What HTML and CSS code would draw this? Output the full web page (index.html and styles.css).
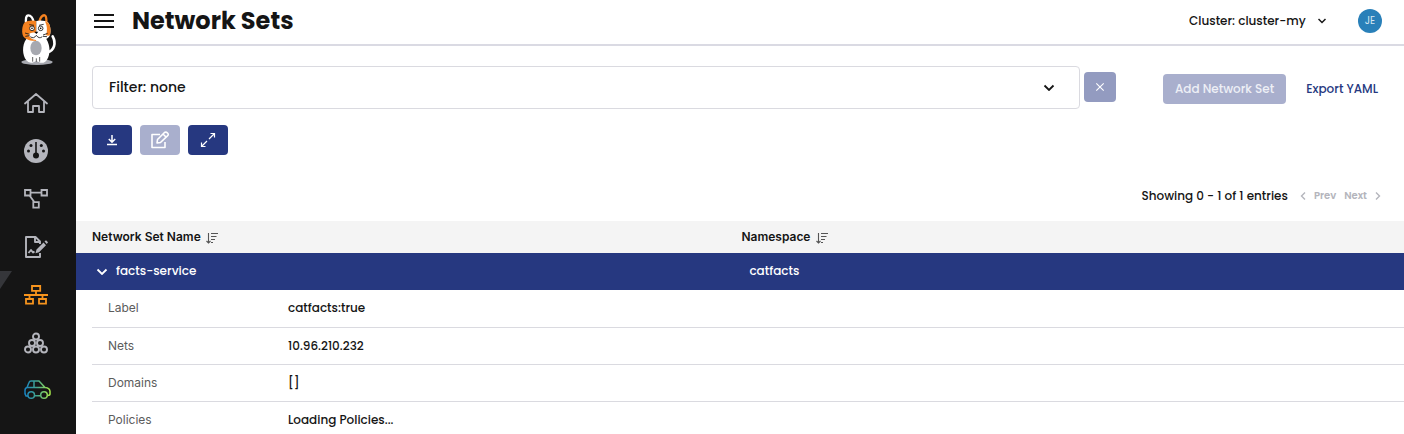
FILE: index.html
```html
<!DOCTYPE html>
<html lang="en">
<head>
<meta charset="utf-8">
<title>Network Sets</title>
<link rel="stylesheet" href="styles.css">
</head>
<body>
<div class="app">
  <nav class="sidebar" aria-label="Main">
    <a class="logo" href="#" aria-label="Calico Cat home">
      <svg width="36" height="52" viewBox="62 43 108 156">
        <ellipse cx="110" cy="187" rx="47" ry="9" fill="#a7a9b0"/>
        <path d="M142 158C162 152 168 130 157 110" fill="none" stroke="#fff" stroke-width="8" stroke-linecap="round"/>
        <path d="M78 118C64 136 66 168 78 182Q84 191 96 189L108 184L120 189Q134 191 140 180C151 164 150 138 138 118Z" fill="#fff"/>
        <ellipse cx="107" cy="145" rx="17" ry="22" fill="#a7a9b0"/>
        <path d="M97 172V186M108 176V186M118 172V186" stroke="#151515" stroke-width="2"/>
        <path d="M78 74C75 58 77 47 84 47C91 47 98 56 100 68" fill="#151515" stroke="#fff" stroke-width="7"/>
        <path d="M116 68C120 54 127 46 133 47C140 49 138 60 138 74" fill="#151515" stroke="#f58220" stroke-width="7"/>
        <path d="M108 64C96 60 80 63 72 69C65 78 63 100 69 110C76 121 92 124 108 124Z" fill="#f58220"/>
        <path d="M108 64C120 60 136 63 144 69C151 78 153 100 147 110C140 121 124 124 108 124Z" fill="#fff"/>
        <path d="M134 65L144 69C151 78 153 98 148 107Q142 110 137 106Q144 86 134 65Z" fill="#f58220"/>
        <path d="M84 104Q95 96 108 100Q124 96 132 104Q122 123 107 121Q91 121 84 104Z" fill="#fff"/>
        <path d="M87 75L101 77M116 77L130 74M74 100L88 104M75 110L88 108M128 106L142 101M128 110L140 111M90 111Q100 119 108 107Q116 119 126 111" fill="none" stroke="#151515" stroke-width="2.5"/>
        <circle cx="95" cy="86" r="7" fill="#fff" stroke="#151515" stroke-width="2.5"/><circle cx="121" cy="86" r="7" fill="#fff" stroke="#151515" stroke-width="2.5"/>
        <circle cx="95" cy="86" r="2.5"/><circle cx="121" cy="86" r="2.5"/><path d="M102 96H114L108 103Z"/>
      </svg>
    </a>
    <a class="nav-item" href="#" aria-label="Home">
      <svg width="28" height="28" viewBox="0 0 28 28" fill="none" stroke="currentColor" stroke-width="1.8" stroke-linejoin="round" stroke-linecap="round"><path d="M3 14.500L14 5L25 14.500M6 12.500V23H11V17H17V23H22V12.500"/></svg>
    </a>
    <a class="nav-item" href="#" aria-label="Dashboard">
      <svg width="28" height="28" viewBox="0 0 28 28"><circle cx="14" cy="14" r="12" fill="currentColor"/><g fill="#151515"><circle cx="9" cy="8.5" r="1.5"/><circle cx="19.3" cy="8.5" r="1.5"/><circle cx="6.5" cy="14" r="1.5"/><circle cx="21.5" cy="14" r="1.5"/><circle cx="14" cy="18.5" r="3"/><path d="M13.2 5H14.8V17H13.2Z"/></g></svg>
    </a>
    <a class="nav-item" href="#" aria-label="Service graph">
      <svg width="28" height="28" viewBox="0 0 28 28" fill="none" stroke="currentColor" stroke-width="1.8"><path d="M3 5H8.5V10.5H3ZM19.5 5H25V10.5H19.5ZM11.3 17.2H16.8V22.7H11.3ZM8.5 7.7H19.5M7.5 10.5L12.5 17.2"/></svg>
    </a>
    <a class="nav-item" href="#" aria-label="Policies">
      <svg width="28" height="28" viewBox="0 0 28 28" fill="none" stroke="currentColor" stroke-width="1.9" stroke-linejoin="round"><path d="M18 11V8.5L13.5 4H4V24H18V20M13 4V9H18M6.500 20L9 17L11 19.5L12.5 18.500"/><path d="M13.500 20.300L14.500 16.500L21.500 9.500L24 12.300L17 19.300ZM22.500 8.500L24 7.300L26 9.300L24.800 11Z" fill="currentColor" stroke="none"/></svg>
    </a>
    <a class="nav-item nav-item-active" href="#" aria-label="Network sets" aria-current="page">
      <svg width="28" height="28" viewBox="0 0 28 28" fill="none" stroke="currentColor" stroke-width="1.8"><path d="M10 5H18.200V9.800H10ZM4 18H11V22.700H4ZM17 18H24V22.700H17ZM14 10V14M2 14H26M7.500 14V18M20.500 14V18"/></svg>
    </a>
    <a class="nav-item" href="#" aria-label="Endpoints">
      <svg width="28" height="28" viewBox="0 0 28 28" fill="none" stroke="currentColor" stroke-width="1.9"><circle cx="14" cy="7.500" r="3"/><circle cx="10" cy="14" r="3"/><circle cx="18" cy="14" r="3"/><circle cx="6" cy="20.500" r="3"/><circle cx="14" cy="20.500" r="3"/><circle cx="22" cy="20.500" r="3"/></svg>
    </a>
    <a class="nav-item" href="#" aria-label="Kibana">
      <svg class="car" width="28" height="28" viewBox="0 0 28 28" fill="none" stroke="url(#car)" stroke-width="1.500" stroke-linejoin="round"><defs><linearGradient id="car" gradientUnits="userSpaceOnUse" x1="2" y1="0" x2="28" y2="0"><stop offset="0" stop-color="#1580c4"/><stop offset=".5" stop-color="#45a58d"/><stop offset="1" stop-color="#a6e84a"/></linearGradient></defs><path d="M6 19H4Q2.500 17 3 13.500Q3 11 5 10.500L7 5.500Q7.500 4 9 4H17L23 10.500Q28 11 28 14.500V17Q28 18.500 25.500 18.500M12.500 18.800H18.500M5 10.600H23M12 4V10.500"/><circle cx="9.200" cy="18" r="3.300"/><circle cx="22" cy="18" r="3.300"/></svg>
    </a>
  </nav>
  <div class="page">
    <header class="topbar">
      <button class="menu-button" type="button" aria-label="Toggle menu">
        <svg width="20" height="16" viewBox="0 0 20 16" stroke="#151515" stroke-width="2"><path d="M0 2H20M0 8H20M0 14H20"/></svg>
      </button>
      <h1 class="title">Network Sets</h1>
      <div class="cluster">
        <select class="cluster-select" aria-label="Cluster"><option>Cluster: cluster-my</option></select>
        <svg width="8" height="6" viewBox="0 0 8 6" fill="none" stroke="#151515" stroke-width="1.500"><path d="M.5 1L4 4.500L7.500 1"/></svg>
      </div>
      <button class="avatar" type="button" aria-label="Account">JE</button>
    </header>
    <main>
      <div class="controls">
        <div class="filter-group">
          <button class="filter" type="button" aria-expanded="false">Filter: none
            <svg width="12" height="8" viewBox="0 0 12 8" fill="none" stroke="#151515" stroke-width="1.800"><path d="M1.500 2.500L6 7L10.500 2.500"/></svg>
          </button>
          <button class="clear" type="button" aria-label="Clear filter" disabled>
            <svg width="10" height="10" viewBox="0 0 10 10" stroke="#fff" stroke-width="1.100"><path d="M1.300 1.300L8.700 8.700M8.700 1.300L1.300 8.700"/></svg>
          </button>
        </div>
        <div class="actions">
          <button class="add" type="button" disabled>Add Network Set</button>
          <a class="export" href="#">Export YAML</a>
        </div>
      </div>
      <div class="tools">
        <button class="tool" type="button" aria-label="Download">
          <svg width="20" height="20" viewBox="0 0 20 20" fill="none" stroke="#fff" stroke-width="1.500"><path d="M10 5V12M6.800 9L10 12.200L13.200 9M5 14.500H15"/></svg>
        </button>
        <button class="tool" type="button" aria-label="Edit" disabled>
          <svg width="20" height="20" viewBox="0 0 20 20" fill="none" stroke="#fff" stroke-width="1.600" stroke-linejoin="round"><path d="M10 4.500H2V17.500H15V12M7 13L7.500 9.500L14.500 2.500Q16 1.500 17.500 3T17.700 5.700L10.500 12.500ZM13 4L16.200 7.200"/></svg>
        </button>
        <button class="tool" type="button" aria-label="Expand">
          <svg width="20" height="20" viewBox="0 0 20 20" fill="none" stroke="#fff" stroke-width="1.200"><path d="M3.500 16.500L9 11M11 9L16.500 3.500M12.500 3.500H16.500V7.500M3.500 12.500V16.500H7.500"/></svg>
        </button>
      </div>
      <div class="paging">
        <span>Showing 0 - 1 of 1 entries</span>
        <button class="pager" type="button" disabled><svg width="6" height="8" viewBox="0 0 6 8" fill="none" stroke="currentColor" stroke-width="1.400"><path d="M5 .5L1.500 4L5 7.500"/></svg>Prev</button>
        <button class="pager" type="button" disabled>Next<svg width="6" height="8" viewBox="0 0 6 8" fill="none" stroke="currentColor" stroke-width="1.400"><path d="M1 .5L4.500 4L1 7.500"/></svg></button>
      </div>
      <table class="sets">
        <thead>
          <tr>
            <th scope="col">Network Set Name <svg class="sort" width="12" height="12" viewBox="0 0 12 12" fill="none" stroke="currentColor" stroke-width="1.100"><path d="M2.500 1V11M.5 9L2.500 11L4.500 9M5 1.500H12M5 4.500H10.500M5 7.500H9M5 10.500H7"/></svg></th>
            <th scope="col">Namespace <svg class="sort" width="12" height="12" viewBox="0 0 12 12" fill="none" stroke="currentColor" stroke-width="1.100"><path d="M2.500 1V11M.5 9L2.500 11L4.500 9M5 1.500H12M5 4.500H10.500M5 7.500H9M5 10.500H7"/></svg></th>
          </tr>
        </thead>
        <tbody>
          <tr class="set-row">
            <td><button class="row-toggle" type="button" aria-expanded="true"><svg width="12" height="8" viewBox="0 0 12 8" fill="none" stroke="#fff" stroke-width="1.800"><path d="M1.500 2.500L6 7L10.500 2.500"/></svg>facts-service</button></td>
            <td class="namespace">catfacts</td>
          </tr>
          <tr>
            <td class="details-cell" colspan="2">
              <table class="details">
                <tr><th scope="row">Label</th><td>catfacts:true</td></tr>
                <tr><th scope="row">Nets</th><td>10.96.210.232</td></tr>
                <tr><th scope="row">Domains</th><td>[]</td></tr>
                <tr><th scope="row">Policies</th><td>Loading Policies...</td></tr>
              </table>
            </td>
          </tr>
        </tbody>
      </table>
    </main>
  </div>
</div>
</body>
</html>
```
FILE: styles.css
```css
* { box-sizing: border-box; }
body {
  margin: 0;
  background: #fff;
  color: #151515;
  font: 500 12px/16px Poppins, Inter, sans-serif;
}
button, select { font: inherit; color: inherit; }
button { padding: 0; border: 0; background: none; }
svg { display: block; flex: none; }

.app { display: flex; height: 100vh; overflow: hidden; }
.sidebar {
  display: flex;
  flex: none;
  flex-direction: column;
  align-items: stretch;
  width: 76px;
  padding-top: 14px;
  background: #151515;
}
.logo { display: flex; justify-content: center; padding-bottom: 13px; }
.logo svg { margin-left: 2px; }
.nav-item {
  position: relative;
  display: flex;
  flex: none;
  align-items: center;
  justify-content: center;
  height: 48px;
  padding-right: 4px;
  color: #b4b5bc;
}
.car { overflow: visible; }
.nav-item-active { color: #f7941d; }
.nav-item-active::before {
  content: "";
  position: absolute;
  top: 0;
  left: 0;
  width: 12px;
  height: 18px;
  background: #35363a;
  clip-path: polygon(0 0, 100% 0, 0 100%);
}

.page { flex: 1; min-width: 0; }
.topbar {
  display: flex;
  align-items: center;
  height: 46px;
  padding: 0 22px 2px 18px;
  border-bottom: 2px solid #dadae3;
}
.menu-button { margin-right: 18px; }
.title { margin: 0; font-size: 24px; line-height: 32px; font-weight: 700; }
.cluster { display: flex; align-items: center; gap: 12px; margin-left: auto; }
.cluster-select { padding: 0; border: 0; background: none; appearance: none; }
.avatar {
  width: 24px;
  height: 24px;
  margin-left: 32px;
  border-radius: 50%;
  background: #2980b9;
  color: #d4e6f1;
  font-size: 10px;
  font-weight: 400;
}

.controls { display: flex; align-items: center; gap: 16px; padding: 20px 26px 0 16px; }
.filter-group { display: flex; flex: 1; align-items: center; gap: 4px; }
.filter {
  display: flex;
  flex: 1;
  align-items: center;
  justify-content: space-between;
  height: 43px;
  padding: 0 24px 2px 16px;
  border: 1px solid #dadae0;
  border-radius: 4px;
  font-size: 14px;
}
.clear {
  display: grid;
  place-items: center;
  width: 32px;
  height: 30px;
  margin-bottom: 1px;
  border-radius: 4px;
  background: #939bc0;
}
.actions {
  display: flex;
  align-items: center;
  gap: 20px;
  margin-left: 31px;
  padding-top: 2px;
}
.add {
  height: 30px;
  padding: 0 12px;
  border-radius: 4px;
  background: #a9afcd;
  color: #eeeff6;
}
.export { color: #263880; text-decoration: none; }

.tools { display: flex; gap: 8px; padding: 16px; }
.tool {
  display: grid;
  place-items: center;
  width: 40px;
  height: 30px;
  border-radius: 4px;
  background: #263880;
}
.tool:disabled { background: #a9afcd; }

.paging {
  display: flex;
  align-items: center;
  justify-content: flex-end;
  gap: 8px;
  padding: 17px 23px 17px 16px;
}
.pager {
  display: flex;
  align-items: center;
  gap: 8px;
  color: #b4b5bc;
  font-size: 10px;
  font-weight: 600;
}
.paging span { margin-right: 4px; }

.sets { width: 100%; border-collapse: collapse; table-layout: fixed; }
.sets > thead th {
  height: 32px;
  padding: 0 0 0 16px;
  background: #f4f4f4;
  font-family: Inter, sans-serif;
  font-weight: 600;
  text-align: left;
}
.sets > thead th:first-child { width: 48.9%; }
.sort { display: inline-block; margin-left: 2px; color: #555; vertical-align: -3px; }
.set-row td { height: 37px; padding: 0 20px 2px; background: #263880; color: #fff; }
.set-row .namespace { padding-left: 24px; }
.row-toggle { display: flex; align-items: center; gap: 8px; }
.details-cell { padding: 0 0 0 16px; }
.details { width: 100%; border-collapse: collapse; }
.details th, .details td { height: 37px; padding: 0; border-bottom: 1px solid #dadae0; text-align: left; }
.details th {
  width: 196px;
  padding-left: 16px;
  color: #5c5c5c;
  font-family: Inter, sans-serif;
  font-weight: 400;
}
```
